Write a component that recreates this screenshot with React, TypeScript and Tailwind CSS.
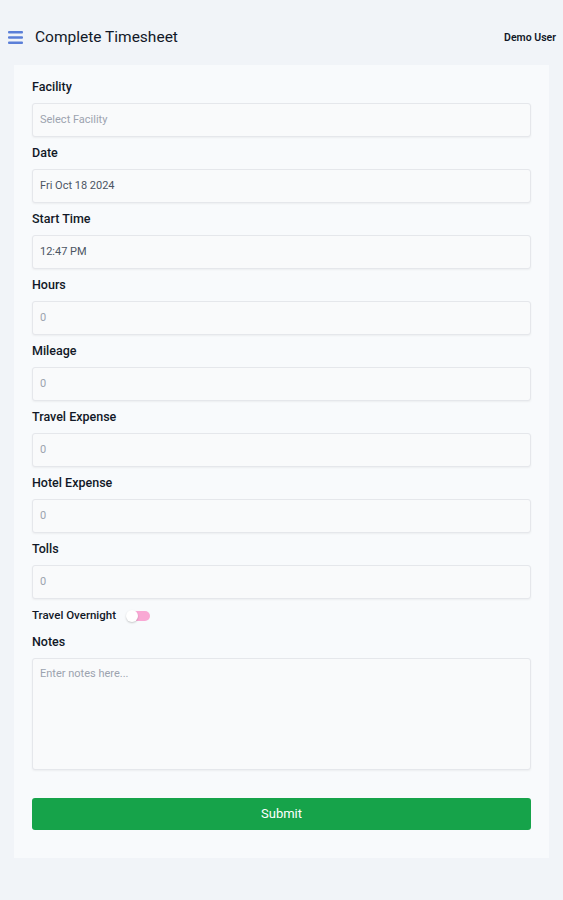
const fields: { label: string; value: string; tone: string }[] = [
  { label: "Facility", value: "Select Facility", tone: "text-[#9ca3af]" },
  { label: "Date", value: "Fri Oct 18 2024", tone: "text-[#4b5563]" },
  { label: "Start Time", value: "12:47 PM", tone: "text-[#4b5563]" },
  { label: "Hours", value: "0", tone: "text-[#9ca3af]" },
  { label: "Mileage", value: "0", tone: "text-[#9ca3af]" },
  { label: "Travel Expense", value: "0", tone: "text-[#9ca3af]" },
  { label: "Hotel Expense", value: "0", tone: "text-[#9ca3af]" },
  { label: "Tolls", value: "0", tone: "text-[#9ca3af]" },
];

export default function App() {
  return (
    <div
      className="min-h-[900px] bg-[#f1f4f8] pb-[42px]"
      style={{ fontFamily: "Roboto, 'Noto Sans', sans-serif" }}
    >
      <header className="flex h-[65px] items-center justify-between pl-[8px] pr-[7px] pt-[10px]">
        <div className="flex items-center gap-[12px]">
          <svg width="15" height="13" viewBox="0 0 15 13">
            <rect x="0" y="0" width="15" height="2.6" rx="1" fill="#5b7fd8" />
            <rect x="0" y="5.2" width="15" height="2.6" rx="1" fill="#5b7fd8" />
            <rect x="0" y="10.4" width="15" height="2.6" rx="1" fill="#5b7fd8" />
          </svg>
          <span className="text-[15.5px] font-normal text-[#111827]">
            Complete Timesheet
          </span>
        </div>
        <span className="text-[10.5px] font-semibold text-[#111827]">Demo User</span>
      </header>

      <main className="mx-[14px] bg-[#f8fafc] px-[18px] pb-[28px] pt-[14px]">
        {fields.map((f) => (
          <div key={f.label} className="mb-[8px]">
            <div className="mb-[8px] h-[16px] text-[12.5px] font-medium leading-[16px] text-[#111827]">
              {f.label}
            </div>
            <div className="flex h-[34px] items-center rounded-[3px] border border-[#e5e7eb] bg-[#f9fafb] px-[7px] shadow-[0_1px_2px_rgba(0,0,0,0.05)]">
              <span className={`text-[11px] ${f.tone}`}>{f.value}</span>
            </div>
          </div>
        ))}

        <div className="flex h-[18px] items-center gap-[10px]">
          <span className="text-[11.5px] font-medium text-[#111827]">Travel Overnight</span>
          <div className="relative h-[10px] w-[24px]">
            <div className="absolute right-0 top-0 h-[10px] w-[18px] rounded-full bg-[#f9a8d4]" />
            <div className="absolute left-0 top-[-1px] h-[12px] w-[12px] rounded-full bg-white shadow-[0_1px_2px_rgba(0,0,0,0.2)]" />
          </div>
        </div>

        <div className="mb-[8px] mt-[9px] h-[16px] text-[12.5px] font-medium leading-[16px] text-[#111827]">
          Notes
        </div>
        <div className="h-[112px] rounded-[3px] border border-[#e5e7eb] bg-[#f9fafb] px-[7px] pt-[8px] text-[11px] leading-[14px] text-[#9ca3af] shadow-[0_1px_2px_rgba(0,0,0,0.05)]">
          Enter notes here...
        </div>

        <button className="mt-[28px] flex h-[32px] w-full items-center justify-center rounded-[3px] bg-[#16a34a] text-[13px] font-normal text-white">
          Submit
        </button>
      </main>
    </div>
  );
}
